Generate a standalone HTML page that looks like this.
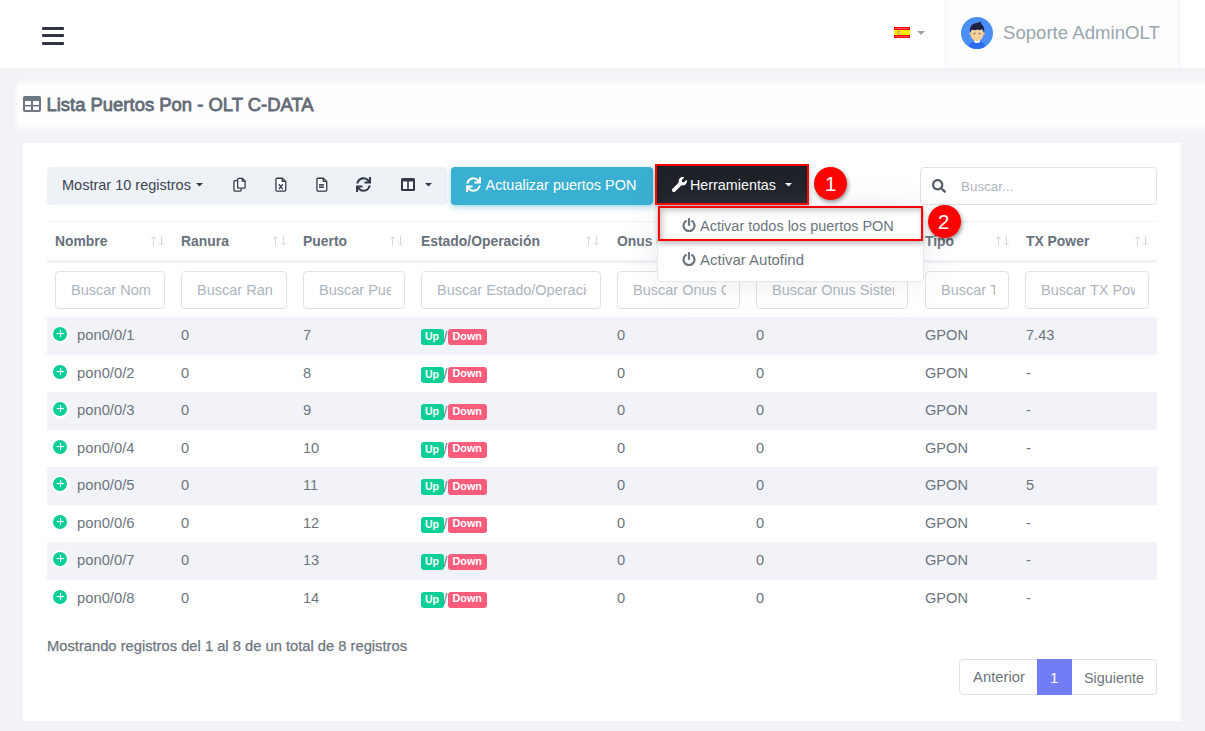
<!DOCTYPE html>
<html><head><meta charset="utf-8"><title>Lista Puertos Pon</title>
<style>
html,body{margin:0;padding:0;}
body{width:1205px;height:731px;overflow:hidden;position:relative;background:#f2f3f7;font-family:"Liberation Sans", sans-serif;}
.a{position:absolute;}
.t{position:absolute;white-space:nowrap;line-height:1;}
.inp{border:1px solid #dee2e6;border-radius:4px;box-sizing:border-box;background:#fff;color:#adb5bd;font-size:14.5px;line-height:1;}
</style></head><body>
<div class="a" style="left:18px;top:84px;width:1200px;height:43px;background:#fefeff;box-shadow:0 0 5px 1px #fefeff;"></div>
<div class="a" style="left:0px;top:0px;width:1205px;height:68px;background:#fff;"></div>
<div class="a" style="left:42px;top:27px;width:22px;height:3.1px;background:#2e3441;border-radius:1px;"></div>
<div class="a" style="left:42px;top:34.3px;width:22px;height:3.1px;background:#2e3441;border-radius:1px;"></div>
<div class="a" style="left:42px;top:41.8px;width:22px;height:3.1px;background:#2e3441;border-radius:1px;"></div>
<svg class="a" style="left:894px;top:27px;" width="16" height="11" viewBox="0 0 16 11"><rect width="16" height="11" fill="#f00"/><rect y="3" width="16" height="5" fill="#f2f000"/><path d="M3.5 4.2Q5 3.4 6.2 4.4L6.4 7Q5 7.6 3.6 6.8Z" fill="#e0603a" opacity=".85"/><circle cx="5.3" cy="5.6" r=".9" fill="#f4f4f4"/><rect x="1" y="1" width="14" height=".6" fill="#f88"/><rect x="1" y="9.4" width="14" height=".6" fill="#f88"/></svg>
<svg class="a" style="left:917px;top:31px;" width="8" height="4" viewBox="0 0 8 4"><path d="M0 0H8L4 4Z" fill="#98a6ad"/></svg>
<div class="a" style="left:945px;top:0px;width:235px;height:68px;background:#fdfdfe;border-left:1px solid #f1f3f8;border-right:1px solid #f1f3f8;box-sizing:border-box;"></div>
<svg class="a" style="left:961px;top:17px;" width="32" height="32" viewBox="0 0 32 32"><defs><clipPath id="cc"><circle cx="16" cy="16" r="16"/></clipPath></defs>
<circle cx="16" cy="16" r="16" fill="#4b8ef7"/>
<g clip-path="url(#cc)">
<path d="M7 32 Q8 24 16 24 Q24 24 25 32Z" fill="#2e6bf2"/>
<path d="M13 21 h6 v4 q-3 2 -6 0z" fill="#fff"/>
<rect x="14" y="20" width="4" height="4" fill="#eebf85"/>
<ellipse cx="16" cy="17" rx="6.5" ry="7" fill="#f5cf9c"/>
<circle cx="9.5" cy="16.5" r="1.3" fill="#f0c38a"/><circle cx="22.5" cy="16.5" r="1.3" fill="#f0c38a"/>
<path d="M9 16 Q7.8 6.5 16 6 Q18.8 4.6 20.6 5.4 L19.9 6.9 Q24.2 8.6 23 16 Q22.6 13.2 21.2 12 Q19.5 13.6 16.5 12.6 Q13 13.8 11 12.6 Q9.6 13.5 9 16Z" fill="#1f2244"/>
<circle cx="13.5" cy="16.5" r=".8" fill="#6b4a3a"/><circle cx="18.5" cy="16.5" r=".8" fill="#6b4a3a"/>
</g></svg>
<div class="t" style="left:1003.00px;top:24.26px;font-size:18.6px;font-weight:400;color:#98a6ad;">Soporte AdminOLT</div>
<svg class="a" style="left:23px;top:96px;" width="18" height="16" viewBox="0 0 18 16"><rect x="0" y="0" width="18" height="16" rx="2" fill="#6c7580"/><rect x="2" y="5" width="6" height="4" fill="#fff"/><rect x="10" y="5" width="6" height="4" fill="#fff"/><rect x="2" y="10.5" width="6" height="3.5" fill="#fff"/><rect x="10" y="10.5" width="6" height="3.5" fill="#fff"/></svg>
<div class="t" style="left:46.50px;top:95.68px;font-size:18.45px;font-weight:400;color:#636c77;-webkit-text-stroke:0.8px #636c77;">Lista Puertos Pon - OLT C-DATA</div>
<div class="a" style="left:23px;top:143px;width:1158px;height:578px;background:#fff;border-radius:1px;"></div>
<div class="a" style="left:47px;top:167px;width:400px;height:38px;background:#eef2f7;border-radius:4px;"></div>
<div class="t" style="left:62.00px;top:177.73px;font-size:14.5px;font-weight:400;color:#3c4450;">Mostrar 10 registros</div>
<svg class="a" style="left:196px;top:183px;" width="7" height="4" viewBox="0 0 7 4"><path d="M0 0H7L3.5 3.5Z" fill="#313a46"/></svg>
<svg class="a" style="left:233px;top:177px;" width="14" height="15" viewBox="0 0 14 15"><g fill="#fff" stroke="#313a46" stroke-width="1.3" stroke-linejoin="round"><path d="M4.6 3.65H1.9a.95.95 0 0 0-.95.95v8.5a.95.95 0 0 0 .95.95H7.2a.95.95 0 0 0 .95-.95V11.2"/><path d="M5.6 1.45H9.5L12.05 4V10.2a.95.95 0 0 1-.95.95H5.6a.95.95 0 0 1-.95-.95V2.4a.95.95 0 0 1 .95-.95z"/><path d="M9.3 1.45V4.2H12.05" fill="none"/></g></svg>
<svg class="a" style="left:275px;top:177px;" width="12" height="15" viewBox="0 0 12 15"><g fill="#fff" stroke="#313a46" stroke-width="1.3" stroke-linejoin="round"><path d="M1.9 1.25H7.4L10.75 4.6V13.1a.95.95 0 0 1-.95.95H1.9a.95.95 0 0 1-.95-.95V2.2a.95.95 0 0 1 .95-.95z"/><path d="M7.2 1.25V4.3H10.75" fill="none"/><path d="M3.9 7.3l3.9 4.8M7.8 7.3l-3.9 4.8" stroke-width="1.35" fill="none"/></g></svg>
<svg class="a" style="left:316px;top:177px;" width="12" height="15" viewBox="0 0 12 15"><g fill="#fff" stroke="#313a46" stroke-width="1.3" stroke-linejoin="round"><path d="M1.9 1.25H7.4L10.75 4.6V13.1a.95.95 0 0 1-.95.95H1.9a.95.95 0 0 1-.95-.95V2.2a.95.95 0 0 1 .95-.95z"/><path d="M7.2 1.25V4.3H10.75" fill="none"/></g><rect x="3" y="7.2" width="5" height="3.6" fill="#9aa0a8"/><rect x="3" y="7.2" width="5" height="1.1" fill="#313a46"/><rect x="3" y="9.7" width="5" height="1.1" fill="#313a46"/></svg>
<svg class="a" style="left:356px;top:177px;" width="15" height="15" viewBox="0 0 512 512"><path d="M440.65 12.57l4 82.77A247.16 247.16 0 0 0 255.83 8C134.73 8 33.91 94.92 12.290 209.82A12 12 0 0 0 24.09 224h49.05a12 12 0 0 0 11.67-9.26 175.91 175.91 0 0 1 317-56.94l-101.46-4.86a12 12 0 0 0-12.57 12v47.41a12 12 0 0 0 12 12H500a12 12 0 0 0 12-12V12a12 12 0 0 0-12-12h-47.37a12 12 0 0 0-11.98 12.57zM255.83 432a175.61 175.61 0 0 1-146-77.8l101.8 4.87a12 12 0 0 0 12.57-12v-47.4a12 12 0 0 0-12-12H12a12 12 0 0 0-12 12V500a12 12 0 0 0 12 12h47.35a12 12 0 0 0 12-12.6l-4.15-82.57A247.17 247.17 0 0 0 255.830 504c121.11 0 221.93-86.92 243.55-201.82a12 12 0 0 0-11.8-14.18h-49.05a12 12 0 0 0-11.67 9.26A175.86 175.86 0 0 1 255.83 432z" fill="#313a46"/></svg>
<svg class="a" style="left:401px;top:178px;" width="14" height="13" viewBox="0 0 14 13"><rect x="0" y="0" width="14" height="13" rx="1.5" fill="#313a46"/><rect x="2" y="3.5" width="4.2" height="7.5" fill="#fff"/><rect x="7.8" y="3.5" width="4.2" height="7.5" fill="#fff"/></svg>
<svg class="a" style="left:425px;top:183px;" width="7" height="4" viewBox="0 0 7 4"><path d="M0 0H7L3.5 3.5Z" fill="#313a46"/></svg>
<div class="a" style="left:451px;top:167px;width:202px;height:38px;background:#39afd1;border-radius:4px;box-shadow:0 2px 6px 0 rgba(57,175,209,.5);"></div>
<svg class="a" style="left:466px;top:177px;" width="15" height="15" viewBox="0 0 512 512"><path d="M440.65 12.57l4 82.77A247.16 247.16 0 0 0 255.83 8C134.73 8 33.91 94.92 12.290 209.82A12 12 0 0 0 24.09 224h49.05a12 12 0 0 0 11.67-9.26 175.91 175.91 0 0 1 317-56.94l-101.46-4.86a12 12 0 0 0-12.57 12v47.41a12 12 0 0 0 12 12H500a12 12 0 0 0 12-12V12a12 12 0 0 0-12-12h-47.37a12 12 0 0 0-11.98 12.57zM255.83 432a175.61 175.61 0 0 1-146-77.8l101.8 4.87a12 12 0 0 0 12.57-12v-47.4a12 12 0 0 0-12-12H12a12 12 0 0 0-12 12V500a12 12 0 0 0 12 12h47.35a12 12 0 0 0 12-12.6l-4.15-82.57A247.17 247.17 0 0 0 255.830 504c121.11 0 221.93-86.92 243.55-201.82a12 12 0 0 0-11.8-14.18h-49.05a12 12 0 0 0-11.67 9.26A175.86 175.86 0 0 1 255.83 432z" fill="#fff"/></svg>
<div class="t" style="left:485.50px;top:177.77px;font-size:14.45px;font-weight:400;color:#fff;">Actualizar puertos PON</div>
<div class="a" style="left:655px;top:164px;width:154px;height:41px;background:#f00;box-shadow:0 3px 5px rgba(0,0,0,.25);"></div>
<div class="a" style="left:657px;top:166px;width:150px;height:37px;background:#1e2128;"></div>
<svg class="a" style="left:672px;top:177px;" width="15" height="15" viewBox="0 0 512 512"><path d="M507.73 109.1c-2.24-9.030-13.54-12.09-20.12-5.51l-74.36 74.36-67.88-11.31-11.31-67.88 74.36-74.36c6.62-6.62 3.43-17.9-5.66-20.16-47.38-11.74-99.55.91-136.58 37.93-39.64 39.64-50.550 97.1-34.05 147.2L18.74 402.76c-24.99 24.99-24.99 65.51 0 90.5 24.99 24.99 65.51 24.99 90.5 0l213.21-213.21c50.12 16.71 107.47 5.68 147.37-34.22 37.07-37.07 49.7-89.32 37.91-136.73z" fill="#fff"/></svg>
<div class="t" style="left:690.00px;top:177.87px;font-size:14.33px;font-weight:400;color:#fff;">Herramientas</div>
<svg class="a" style="left:785px;top:183px;" width="7" height="4" viewBox="0 0 7 4"><path d="M0 0H7L3.5 3.5Z" fill="#fff"/></svg>
<div class="a" style="left:814px;top:167px;width:33px;height:33px;border-radius:50%;background:#ff0000;box-shadow:1px 2px 4px rgba(0,0,0,.45);"></div>
<div class="t" style="left:825.00px;top:173.73px;font-size:20.4px;font-weight:400;color:#fff;">1</div>
<div class="a" style="left:920px;top:167px;width:237px;height:38px;border:1px solid #dee2e6;border-radius:4px;box-sizing:border-box;background:#fff;"></div>
<svg class="a" style="left:932px;top:179px;" width="14" height="14" viewBox="0 0 512 512"><path d="M505 442.7L405.3 343c-4.5-4.5-10.6-7-17-7H372c27.6-35.3 44-79.7 44-128C416 93.1 322.9 0 208 0S0 93.1 0 208s93.1 208 208 208c48.3 0 92.7-16.4 128-44v16.3c0 6.4 2.5 12.5 7 17l99.7 99.7c9.4 9.4 24.6 9.4 33.9 0l28.3-28.3c9.4-9.4 9.4-24.6.1-34zM208 336c-70.7 0-128-57.2-128-128 0-70.7 57.2-128 128-128 70.7 0 128 57.2 128 128 0 70.7-57.2 128-128 128z" fill="#555d69"/></svg>
<div class="t" style="left:961.00px;top:179.66px;font-size:13.4px;font-weight:400;color:#adb5bd;">Buscar...</div>
<div class="a" style="left:47px;top:221px;width:1110px;height:1px;background:#eef2f7;"></div>
<div class="t" style="left:55.00px;top:234.73px;font-size:13.9px;font-weight:700;color:#68717c;">Nombre</div>
<div class="t" style="left:181.00px;top:234.73px;font-size:13.9px;font-weight:700;color:#68717c;">Ranura</div>
<div class="t" style="left:303.00px;top:234.73px;font-size:13.9px;font-weight:700;color:#68717c;">Puerto</div>
<div class="t" style="left:421.00px;top:234.73px;font-size:13.9px;font-weight:700;color:#68717c;">Estado/Operación</div>
<div class="t" style="left:617.00px;top:234.73px;font-size:13.9px;font-weight:700;color:#68717c;">Onus Conectadas</div>
<div class="t" style="left:756.00px;top:234.73px;font-size:13.9px;font-weight:700;color:#68717c;">Onus Sistema</div>
<div class="t" style="left:925.00px;top:234.73px;font-size:13.9px;font-weight:700;color:#68717c;">Tipo</div>
<div class="t" style="left:1026.00px;top:234.73px;font-size:13.9px;font-weight:700;color:#68717c;">TX Power</div>
<svg class="a" style="left:151px;top:236px;" width="14" height="10" viewBox="0 0 14 10"><g fill="none" stroke="#d3d8df" stroke-width="1"><path d="M2.5 9.5V0.8M0.1 3.1L2.5 0.7L4.9 3.1"/><path d="M10.5 0V8.9M8.1 6.5L10.5 8.9L12.9 6.5"/></g></svg>
<svg class="a" style="left:273px;top:236px;" width="14" height="10" viewBox="0 0 14 10"><g fill="none" stroke="#d3d8df" stroke-width="1"><path d="M2.5 9.5V0.8M0.1 3.1L2.5 0.7L4.9 3.1"/><path d="M10.5 0V8.9M8.1 6.5L10.5 8.9L12.9 6.5"/></g></svg>
<svg class="a" style="left:390px;top:236px;" width="14" height="10" viewBox="0 0 14 10"><g fill="none" stroke="#d3d8df" stroke-width="1"><path d="M2.5 9.5V0.8M0.1 3.1L2.5 0.7L4.9 3.1"/><path d="M10.5 0V8.9M8.1 6.5L10.5 8.9L12.9 6.5"/></g></svg>
<svg class="a" style="left:586px;top:236px;" width="14" height="10" viewBox="0 0 14 10"><g fill="none" stroke="#d3d8df" stroke-width="1"><path d="M2.5 9.5V0.8M0.1 3.1L2.5 0.7L4.9 3.1"/><path d="M10.5 0V8.9M8.1 6.5L10.5 8.9L12.9 6.5"/></g></svg>
<svg class="a" style="left:996px;top:236px;" width="14" height="10" viewBox="0 0 14 10"><g fill="none" stroke="#d3d8df" stroke-width="1"><path d="M2.5 9.5V0.8M0.1 3.1L2.5 0.7L4.9 3.1"/><path d="M10.5 0V8.9M8.1 6.5L10.5 8.9L12.9 6.5"/></g></svg>
<svg class="a" style="left:1135px;top:236px;" width="14" height="10" viewBox="0 0 14 10"><g fill="none" stroke="#d3d8df" stroke-width="1"><path d="M2.5 9.5V0.8M0.1 3.1L2.5 0.7L4.9 3.1"/><path d="M10.5 0V8.9M8.1 6.5L10.5 8.9L12.9 6.5"/></g></svg>
<div class="a" style="left:47px;top:260px;width:1110px;height:3px;background:#eef1f6;"></div>
<div class="a inp" style="left:55px;top:271px;width:110px;height:38px;"><span style="position:absolute;left:15px;right:13px;top:10.73px;overflow:hidden;white-space:nowrap;">Buscar Nom</span></div>
<div class="a inp" style="left:181px;top:271px;width:106px;height:38px;"><span style="position:absolute;left:15px;right:13px;top:10.73px;overflow:hidden;white-space:nowrap;">Buscar Ran</span></div>
<div class="a inp" style="left:303px;top:271px;width:102px;height:38px;"><span style="position:absolute;left:15px;right:13px;top:10.73px;overflow:hidden;white-space:nowrap;">Buscar Pue</span></div>
<div class="a inp" style="left:421px;top:271px;width:180px;height:38px;"><span style="position:absolute;left:15px;right:13px;top:10.73px;overflow:hidden;white-space:nowrap;">Buscar Estado/Operación</span></div>
<div class="a inp" style="left:617px;top:271px;width:123px;height:38px;"><span style="position:absolute;left:15px;right:13px;top:10.73px;overflow:hidden;white-space:nowrap;">Buscar Onus Conectadas</span></div>
<div class="a inp" style="left:756px;top:271px;width:152px;height:38px;"><span style="position:absolute;left:15px;right:13px;top:10.73px;overflow:hidden;white-space:nowrap;">Buscar Onus Sistema</span></div>
<div class="a inp" style="left:925px;top:271px;width:84px;height:38px;"><span style="position:absolute;left:15px;right:13px;top:10.73px;overflow:hidden;white-space:nowrap;">Buscar Tipo</span></div>
<div class="a inp" style="left:1025px;top:271px;width:124px;height:38px;"><span style="position:absolute;left:15px;right:13px;top:10.73px;overflow:hidden;white-space:nowrap;">Buscar TX Power</span></div>
<div class="a" style="left:47px;top:317.0px;width:1110px;height:37.5px;background:#f2f3f8;"></div>
<div class="a" style="left:51.5px;top:325.5px;width:17px;height:17px;border-radius:50%;background:#fff;box-shadow:0 0 1.5px 0.5px #fff;"></div>
<svg class="a" style="left:53px;top:327.0px;" width="14" height="14" viewBox="0 0 14 14"><circle cx="7" cy="7" r="7" fill="#0acf97"/><rect x="7" y="3" width="1.1" height="7" fill="#fff"/><rect x="3.8" y="6" width="7" height="1.1" fill="#fff"/></svg>
<div class="t" style="left:77.00px;top:328.00px;font-size:14.77px;font-weight:400;color:#6c757d;">pon0/0/1</div>
<div class="t" style="left:181.00px;top:328.14px;font-size:14.6px;font-weight:400;color:#6c757d;">0</div>
<div class="t" style="left:303.00px;top:328.14px;font-size:14.6px;font-weight:400;color:#6c757d;">7</div>
<div class="a" style="left:421px;top:329.0px;width:23px;height:16px;background:#0acf97;border-radius:3px;"></div>
<div class="t" style="left:425.00px;top:331.11px;font-size:10.5px;font-weight:700;color:#fff;">Up</div>
<div class="t" style="left:443.50px;top:329.65px;font-size:14px;font-weight:400;color:#6c757d;">/</div>
<div class="a" style="left:448px;top:329.0px;width:39px;height:16px;background:#fa5c7c;border-radius:3px;"></div>
<div class="t" style="left:452.50px;top:330.86px;font-size:10.8px;font-weight:700;color:#fff;">Down</div>
<div class="t" style="left:617.00px;top:328.14px;font-size:14.6px;font-weight:400;color:#6c757d;">0</div>
<div class="t" style="left:756.00px;top:328.14px;font-size:14.6px;font-weight:400;color:#6c757d;">0</div>
<div class="t" style="left:925.00px;top:328.14px;font-size:14.6px;font-weight:400;color:#6c757d;">GPON</div>
<div class="t" style="left:1026.00px;top:328.14px;font-size:14.6px;font-weight:400;color:#6c757d;">7.43</div>
<div class="a" style="left:51.5px;top:363.0px;width:17px;height:17px;border-radius:50%;background:#fff;box-shadow:0 0 1.5px 0.5px #fff;"></div>
<svg class="a" style="left:53px;top:364.5px;" width="14" height="14" viewBox="0 0 14 14"><circle cx="7" cy="7" r="7" fill="#0acf97"/><rect x="7" y="3" width="1.1" height="7" fill="#fff"/><rect x="3.8" y="6" width="7" height="1.1" fill="#fff"/></svg>
<div class="t" style="left:77.00px;top:365.50px;font-size:14.77px;font-weight:400;color:#6c757d;">pon0/0/2</div>
<div class="t" style="left:181.00px;top:365.64px;font-size:14.6px;font-weight:400;color:#6c757d;">0</div>
<div class="t" style="left:303.00px;top:365.64px;font-size:14.6px;font-weight:400;color:#6c757d;">8</div>
<div class="a" style="left:421px;top:366.5px;width:23px;height:16px;background:#0acf97;border-radius:3px;"></div>
<div class="t" style="left:425.00px;top:368.61px;font-size:10.5px;font-weight:700;color:#fff;">Up</div>
<div class="t" style="left:443.50px;top:367.15px;font-size:14px;font-weight:400;color:#6c757d;">/</div>
<div class="a" style="left:448px;top:366.5px;width:39px;height:16px;background:#fa5c7c;border-radius:3px;"></div>
<div class="t" style="left:452.50px;top:368.36px;font-size:10.8px;font-weight:700;color:#fff;">Down</div>
<div class="t" style="left:617.00px;top:365.64px;font-size:14.6px;font-weight:400;color:#6c757d;">0</div>
<div class="t" style="left:756.00px;top:365.64px;font-size:14.6px;font-weight:400;color:#6c757d;">0</div>
<div class="t" style="left:925.00px;top:365.64px;font-size:14.6px;font-weight:400;color:#6c757d;">GPON</div>
<div class="t" style="left:1026.00px;top:365.64px;font-size:14.6px;font-weight:400;color:#6c757d;">-</div>
<div class="a" style="left:47px;top:392.0px;width:1110px;height:37.5px;background:#f2f3f8;"></div>
<div class="a" style="left:51.5px;top:400.5px;width:17px;height:17px;border-radius:50%;background:#fff;box-shadow:0 0 1.5px 0.5px #fff;"></div>
<svg class="a" style="left:53px;top:402.0px;" width="14" height="14" viewBox="0 0 14 14"><circle cx="7" cy="7" r="7" fill="#0acf97"/><rect x="7" y="3" width="1.1" height="7" fill="#fff"/><rect x="3.8" y="6" width="7" height="1.1" fill="#fff"/></svg>
<div class="t" style="left:77.00px;top:403.00px;font-size:14.77px;font-weight:400;color:#6c757d;">pon0/0/3</div>
<div class="t" style="left:181.00px;top:403.14px;font-size:14.6px;font-weight:400;color:#6c757d;">0</div>
<div class="t" style="left:303.00px;top:403.14px;font-size:14.6px;font-weight:400;color:#6c757d;">9</div>
<div class="a" style="left:421px;top:404.0px;width:23px;height:16px;background:#0acf97;border-radius:3px;"></div>
<div class="t" style="left:425.00px;top:406.11px;font-size:10.5px;font-weight:700;color:#fff;">Up</div>
<div class="t" style="left:443.50px;top:404.65px;font-size:14px;font-weight:400;color:#6c757d;">/</div>
<div class="a" style="left:448px;top:404.0px;width:39px;height:16px;background:#fa5c7c;border-radius:3px;"></div>
<div class="t" style="left:452.50px;top:405.86px;font-size:10.8px;font-weight:700;color:#fff;">Down</div>
<div class="t" style="left:617.00px;top:403.14px;font-size:14.6px;font-weight:400;color:#6c757d;">0</div>
<div class="t" style="left:756.00px;top:403.14px;font-size:14.6px;font-weight:400;color:#6c757d;">0</div>
<div class="t" style="left:925.00px;top:403.14px;font-size:14.6px;font-weight:400;color:#6c757d;">GPON</div>
<div class="t" style="left:1026.00px;top:403.14px;font-size:14.6px;font-weight:400;color:#6c757d;">-</div>
<div class="a" style="left:51.5px;top:438.0px;width:17px;height:17px;border-radius:50%;background:#fff;box-shadow:0 0 1.5px 0.5px #fff;"></div>
<svg class="a" style="left:53px;top:439.5px;" width="14" height="14" viewBox="0 0 14 14"><circle cx="7" cy="7" r="7" fill="#0acf97"/><rect x="7" y="3" width="1.1" height="7" fill="#fff"/><rect x="3.8" y="6" width="7" height="1.1" fill="#fff"/></svg>
<div class="t" style="left:77.00px;top:440.50px;font-size:14.77px;font-weight:400;color:#6c757d;">pon0/0/4</div>
<div class="t" style="left:181.00px;top:440.64px;font-size:14.6px;font-weight:400;color:#6c757d;">0</div>
<div class="t" style="left:303.00px;top:440.64px;font-size:14.6px;font-weight:400;color:#6c757d;">10</div>
<div class="a" style="left:421px;top:441.5px;width:23px;height:16px;background:#0acf97;border-radius:3px;"></div>
<div class="t" style="left:425.00px;top:443.61px;font-size:10.5px;font-weight:700;color:#fff;">Up</div>
<div class="t" style="left:443.50px;top:442.15px;font-size:14px;font-weight:400;color:#6c757d;">/</div>
<div class="a" style="left:448px;top:441.5px;width:39px;height:16px;background:#fa5c7c;border-radius:3px;"></div>
<div class="t" style="left:452.50px;top:443.36px;font-size:10.8px;font-weight:700;color:#fff;">Down</div>
<div class="t" style="left:617.00px;top:440.64px;font-size:14.6px;font-weight:400;color:#6c757d;">0</div>
<div class="t" style="left:756.00px;top:440.64px;font-size:14.6px;font-weight:400;color:#6c757d;">0</div>
<div class="t" style="left:925.00px;top:440.64px;font-size:14.6px;font-weight:400;color:#6c757d;">GPON</div>
<div class="t" style="left:1026.00px;top:440.64px;font-size:14.6px;font-weight:400;color:#6c757d;">-</div>
<div class="a" style="left:47px;top:467.0px;width:1110px;height:37.5px;background:#f2f3f8;"></div>
<div class="a" style="left:51.5px;top:475.5px;width:17px;height:17px;border-radius:50%;background:#fff;box-shadow:0 0 1.5px 0.5px #fff;"></div>
<svg class="a" style="left:53px;top:477.0px;" width="14" height="14" viewBox="0 0 14 14"><circle cx="7" cy="7" r="7" fill="#0acf97"/><rect x="7" y="3" width="1.1" height="7" fill="#fff"/><rect x="3.8" y="6" width="7" height="1.1" fill="#fff"/></svg>
<div class="t" style="left:77.00px;top:478.00px;font-size:14.77px;font-weight:400;color:#6c757d;">pon0/0/5</div>
<div class="t" style="left:181.00px;top:478.14px;font-size:14.6px;font-weight:400;color:#6c757d;">0</div>
<div class="t" style="left:303.00px;top:478.14px;font-size:14.6px;font-weight:400;color:#6c757d;">11</div>
<div class="a" style="left:421px;top:479.0px;width:23px;height:16px;background:#0acf97;border-radius:3px;"></div>
<div class="t" style="left:425.00px;top:481.11px;font-size:10.5px;font-weight:700;color:#fff;">Up</div>
<div class="t" style="left:443.50px;top:479.65px;font-size:14px;font-weight:400;color:#6c757d;">/</div>
<div class="a" style="left:448px;top:479.0px;width:39px;height:16px;background:#fa5c7c;border-radius:3px;"></div>
<div class="t" style="left:452.50px;top:480.86px;font-size:10.8px;font-weight:700;color:#fff;">Down</div>
<div class="t" style="left:617.00px;top:478.14px;font-size:14.6px;font-weight:400;color:#6c757d;">0</div>
<div class="t" style="left:756.00px;top:478.14px;font-size:14.6px;font-weight:400;color:#6c757d;">0</div>
<div class="t" style="left:925.00px;top:478.14px;font-size:14.6px;font-weight:400;color:#6c757d;">GPON</div>
<div class="t" style="left:1026.00px;top:478.14px;font-size:14.6px;font-weight:400;color:#6c757d;">5</div>
<div class="a" style="left:51.5px;top:513.0px;width:17px;height:17px;border-radius:50%;background:#fff;box-shadow:0 0 1.5px 0.5px #fff;"></div>
<svg class="a" style="left:53px;top:514.5px;" width="14" height="14" viewBox="0 0 14 14"><circle cx="7" cy="7" r="7" fill="#0acf97"/><rect x="7" y="3" width="1.1" height="7" fill="#fff"/><rect x="3.8" y="6" width="7" height="1.1" fill="#fff"/></svg>
<div class="t" style="left:77.00px;top:515.50px;font-size:14.77px;font-weight:400;color:#6c757d;">pon0/0/6</div>
<div class="t" style="left:181.00px;top:515.64px;font-size:14.6px;font-weight:400;color:#6c757d;">0</div>
<div class="t" style="left:303.00px;top:515.64px;font-size:14.6px;font-weight:400;color:#6c757d;">12</div>
<div class="a" style="left:421px;top:516.5px;width:23px;height:16px;background:#0acf97;border-radius:3px;"></div>
<div class="t" style="left:425.00px;top:518.61px;font-size:10.5px;font-weight:700;color:#fff;">Up</div>
<div class="t" style="left:443.50px;top:517.15px;font-size:14px;font-weight:400;color:#6c757d;">/</div>
<div class="a" style="left:448px;top:516.5px;width:39px;height:16px;background:#fa5c7c;border-radius:3px;"></div>
<div class="t" style="left:452.50px;top:518.36px;font-size:10.8px;font-weight:700;color:#fff;">Down</div>
<div class="t" style="left:617.00px;top:515.64px;font-size:14.6px;font-weight:400;color:#6c757d;">0</div>
<div class="t" style="left:756.00px;top:515.64px;font-size:14.6px;font-weight:400;color:#6c757d;">0</div>
<div class="t" style="left:925.00px;top:515.64px;font-size:14.6px;font-weight:400;color:#6c757d;">GPON</div>
<div class="t" style="left:1026.00px;top:515.64px;font-size:14.6px;font-weight:400;color:#6c757d;">-</div>
<div class="a" style="left:47px;top:542.0px;width:1110px;height:37.5px;background:#f2f3f8;"></div>
<div class="a" style="left:51.5px;top:550.5px;width:17px;height:17px;border-radius:50%;background:#fff;box-shadow:0 0 1.5px 0.5px #fff;"></div>
<svg class="a" style="left:53px;top:552.0px;" width="14" height="14" viewBox="0 0 14 14"><circle cx="7" cy="7" r="7" fill="#0acf97"/><rect x="7" y="3" width="1.1" height="7" fill="#fff"/><rect x="3.8" y="6" width="7" height="1.1" fill="#fff"/></svg>
<div class="t" style="left:77.00px;top:553.00px;font-size:14.77px;font-weight:400;color:#6c757d;">pon0/0/7</div>
<div class="t" style="left:181.00px;top:553.14px;font-size:14.6px;font-weight:400;color:#6c757d;">0</div>
<div class="t" style="left:303.00px;top:553.14px;font-size:14.6px;font-weight:400;color:#6c757d;">13</div>
<div class="a" style="left:421px;top:554.0px;width:23px;height:16px;background:#0acf97;border-radius:3px;"></div>
<div class="t" style="left:425.00px;top:556.11px;font-size:10.5px;font-weight:700;color:#fff;">Up</div>
<div class="t" style="left:443.50px;top:554.65px;font-size:14px;font-weight:400;color:#6c757d;">/</div>
<div class="a" style="left:448px;top:554.0px;width:39px;height:16px;background:#fa5c7c;border-radius:3px;"></div>
<div class="t" style="left:452.50px;top:555.86px;font-size:10.8px;font-weight:700;color:#fff;">Down</div>
<div class="t" style="left:617.00px;top:553.14px;font-size:14.6px;font-weight:400;color:#6c757d;">0</div>
<div class="t" style="left:756.00px;top:553.14px;font-size:14.6px;font-weight:400;color:#6c757d;">0</div>
<div class="t" style="left:925.00px;top:553.14px;font-size:14.6px;font-weight:400;color:#6c757d;">GPON</div>
<div class="t" style="left:1026.00px;top:553.14px;font-size:14.6px;font-weight:400;color:#6c757d;">-</div>
<div class="a" style="left:51.5px;top:588.0px;width:17px;height:17px;border-radius:50%;background:#fff;box-shadow:0 0 1.5px 0.5px #fff;"></div>
<svg class="a" style="left:53px;top:589.5px;" width="14" height="14" viewBox="0 0 14 14"><circle cx="7" cy="7" r="7" fill="#0acf97"/><rect x="7" y="3" width="1.1" height="7" fill="#fff"/><rect x="3.8" y="6" width="7" height="1.1" fill="#fff"/></svg>
<div class="t" style="left:77.00px;top:590.50px;font-size:14.77px;font-weight:400;color:#6c757d;">pon0/0/8</div>
<div class="t" style="left:181.00px;top:590.64px;font-size:14.6px;font-weight:400;color:#6c757d;">0</div>
<div class="t" style="left:303.00px;top:590.64px;font-size:14.6px;font-weight:400;color:#6c757d;">14</div>
<div class="a" style="left:421px;top:591.5px;width:23px;height:16px;background:#0acf97;border-radius:3px;"></div>
<div class="t" style="left:425.00px;top:593.61px;font-size:10.5px;font-weight:700;color:#fff;">Up</div>
<div class="t" style="left:443.50px;top:592.15px;font-size:14px;font-weight:400;color:#6c757d;">/</div>
<div class="a" style="left:448px;top:591.5px;width:39px;height:16px;background:#fa5c7c;border-radius:3px;"></div>
<div class="t" style="left:452.50px;top:593.36px;font-size:10.8px;font-weight:700;color:#fff;">Down</div>
<div class="t" style="left:617.00px;top:590.64px;font-size:14.6px;font-weight:400;color:#6c757d;">0</div>
<div class="t" style="left:756.00px;top:590.64px;font-size:14.6px;font-weight:400;color:#6c757d;">0</div>
<div class="t" style="left:925.00px;top:590.64px;font-size:14.6px;font-weight:400;color:#6c757d;">GPON</div>
<div class="t" style="left:1026.00px;top:590.64px;font-size:14.6px;font-weight:400;color:#6c757d;">-</div>
<div class="t" style="left:47.00px;top:638.54px;font-size:14.72px;font-weight:400;color:#6c757d;-webkit-text-stroke:0.25px #6c757d;">Mostrando registros del 1 al 8 de un total de 8 registros</div>
<div class="a" style="left:959px;top:659px;width:198px;height:36px;border:1px solid #dee2e6;border-radius:4px;box-sizing:border-box;background:#fff;"></div>
<div class="a" style="left:1037px;top:659px;width:35px;height:36px;background:#727cf5;"></div>
<div class="t" style="left:973.00px;top:670.43px;font-size:14.85px;font-weight:400;color:#6c757d;">Anterior</div>
<div class="t" style="left:1050.00px;top:670.30px;font-size:15px;font-weight:400;color:#fff;">1</div>
<div class="t" style="left:1084.00px;top:670.82px;font-size:14.39px;font-weight:400;color:#6c757d;">Siguiente</div>
<div class="a" style="left:657px;top:206px;width:267px;height:76px;background:#fff;border:1px solid #e3e7ee;border-radius:4px;box-sizing:border-box;box-shadow:0 0 35px 0 rgba(154,161,171,.2);"></div>
<div class="a" style="left:658px;top:206px;width:265px;height:35px;border:2px solid #f00;box-sizing:border-box;box-shadow:inset 2px 2px 6px rgba(0,0,0,.25), 0 3px 5px rgba(0,0,0,.25);"></div>
<svg class="a" style="left:682px;top:217.5px;" width="14" height="14" viewBox="0 0 14 14"><path d="M7 1v6" stroke="#6c757d" stroke-width="2.2" stroke-linecap="round"/><path d="M3.8 3.2A5.5 5.5 0 1 0 10.2 3.2" fill="none" stroke="#6c757d" stroke-width="2.2" stroke-linecap="round"/></svg>
<div class="t" style="left:700.00px;top:219.04px;font-size:14.48px;font-weight:400;color:#6c757d;">Activar todos los puertos PON</div>
<svg class="a" style="left:682px;top:251.5px;" width="14" height="14" viewBox="0 0 14 14"><path d="M7 1v6" stroke="#6c757d" stroke-width="2.2" stroke-linecap="round"/><path d="M3.8 3.2A5.5 5.5 0 1 0 10.2 3.2" fill="none" stroke="#6c757d" stroke-width="2.2" stroke-linecap="round"/></svg>
<div class="t" style="left:700.00px;top:252.63px;font-size:14.97px;font-weight:400;color:#6c757d;">Activar Autofind</div>
<div class="a" style="left:927.5px;top:205px;width:33px;height:33px;border-radius:50%;background:#ff0000;box-shadow:1px 2px 4px rgba(0,0,0,.45);"></div>
<div class="t" style="left:938.00px;top:211.73px;font-size:20.4px;font-weight:400;color:#fff;">2</div>
</body></html>
